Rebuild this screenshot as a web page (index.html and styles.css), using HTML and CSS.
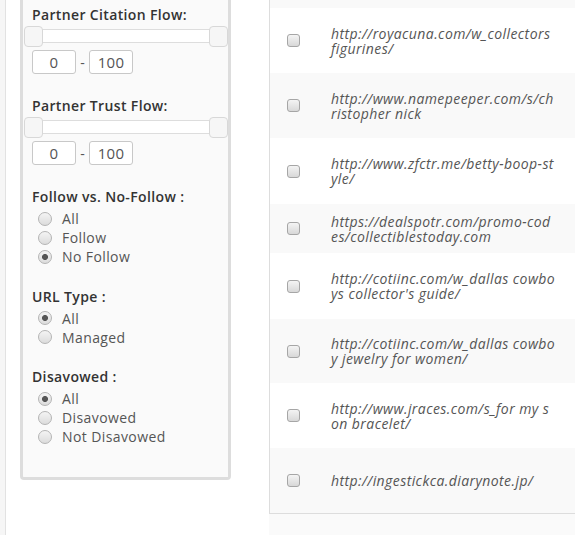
FILE: index.html
```html
<!DOCTYPE html>
<html lang="en">
<head>
<meta charset="utf-8">
<title>Link filters</title>
<link rel="stylesheet" href="styles.css">
</head>
<body>
<div class="page">
  <div class="strip"></div>
  <aside class="sidebar">
    <div class="panel">
      <section class="range">
        <h3 class="title">Partner Citation Flow:</h3>
        <div class="slider"><span class="handle"></span><span class="handle"></span></div>
        <div class="range-inputs"><input class="num" value="0"><span class="dash">-</span><input class="num" value="100"></div>
      </section>
      <section class="range">
        <h3 class="title">Partner Trust Flow:</h3>
        <div class="slider"><span class="handle"></span><span class="handle"></span></div>
        <div class="range-inputs"><input class="num" value="0"><span class="dash">-</span><input class="num" value="100"></div>
      </section>
      <section class="choice">
        <h3 class="title">Follow vs. No-Follow :</h3>
        <div class="options">
          <label class="opt"><input type="radio" name="follow" class="radio">All</label>
          <label class="opt"><input type="radio" name="follow" class="radio">Follow</label>
          <label class="opt"><input type="radio" name="follow" class="radio" checked>No Follow</label>
        </div>
      </section>
      <section class="choice">
        <h3 class="title">URL Type :</h3>
        <div class="options">
          <label class="opt"><input type="radio" name="urltype" class="radio" checked>All</label>
          <label class="opt"><input type="radio" name="urltype" class="radio">Managed</label>
        </div>
      </section>
      <section class="choice last">
        <h3 class="title">Disavowed :</h3>
        <div class="options">
          <label class="opt"><input type="radio" name="disavow" class="radio" checked>All</label>
          <label class="opt"><input type="radio" name="disavow" class="radio">Disavowed</label>
          <label class="opt"><input type="radio" name="disavow" class="radio">Not Disavowed</label>
        </div>
      </section>
    </div>
  </aside>
  <main class="results">
    <div class="table">
      <div class="row partial odd"></div>
      <div class="row"><span class="cb-cell"><input type="checkbox" class="cb"></span><span class="url">http://royacuna.com/w_collectors figurines/</span></div>
      <div class="row odd"><span class="cb-cell"><input type="checkbox" class="cb"></span><span class="url">http://www.namepeeper.com/s/christopher nick</span></div>
      <div class="row tall"><span class="cb-cell"><input type="checkbox" class="cb"></span><span class="url">http://www.zfctr.me/betty-boop-style/</span></div>
      <div class="row odd short"><span class="cb-cell"><input type="checkbox" class="cb"></span><span class="url">https://dealspotr.com/promo-codes/collectiblestoday.com</span></div>
      <div class="row tall"><span class="cb-cell"><input type="checkbox" class="cb"></span><span class="url">http://cotiinc.com/w_dallas cowboys collector's guide/</span></div>
      <div class="row odd low"><span class="cb-cell"><input type="checkbox" class="cb"></span><span class="url">http://cotiinc.com/w_dallas cowboy jewelry for women/</span></div>
      <div class="row"><span class="cb-cell"><input type="checkbox" class="cb"></span><span class="url">http://www.jraces.com/s_for my son bracelet/</span></div>
      <div class="row odd"><span class="cb-cell"><input type="checkbox" class="cb"></span><span class="url">http://ingestickca.diarynote.jp/</span></div>
    </div>
    <div class="table-foot"></div>
  </main>
</div>
</body>
</html>
```

FILE: styles.css
```css
* { box-sizing: border-box; }

html, body {
  margin: 0;
  padding: 0;
  height: 100%;
  overflow: hidden;
  background: #fff;
  font-family: "Open Sans", "Liberation Sans", sans-serif;
}

.page {
  display: flex;
  height: 535px;
}

.strip {
  width: 6px;
  flex: none;
  background: #f6f6f6;
  border-right: 1px solid #e2e2e2;
}

.sidebar {
  flex: none;
  padding-left: 14px;
}

.panel {
  width: 211px;
  background: #fafafa;
  border: 3px solid #dddddd;
  border-top: 0;
  border-radius: 0 0 4px 4px;
  padding: 5px 0 31px 9px;
}

.title {
  margin: 0;
  font-size: 14px;
  line-height: 20px;
  font-weight: 600;
  letter-spacing: 0.36px;
  color: #333;
}

.range {
  margin-bottom: 22px;
}

.slider {
  display: flex;
  justify-content: space-between;
  align-items: center;
  width: 204px;
  height: 14px;
  margin: 4px 0 0 -8px;
  background: #fff;
  border: 1px solid #dddddd;
  border-radius: 4px;
}

.handle {
  flex: none;
  width: 19px;
  height: 21px;
  margin: 0 -1px;
  background: #f6f6f6;
  border: 1px solid #d8d8d8;
  border-radius: 4px;
}

.range-inputs {
  display: flex;
  align-items: center;
  margin-top: 7px;
}

.num {
  width: 44px;
  height: 24px;
  margin: 0;
  padding: 0;
  border: 1px solid #c8c8c8;
  border-radius: 3px;
  background: #fff;
  text-align: center;
  font-family: "Open Sans", "Liberation Sans", sans-serif;
  font-size: 15px;
  letter-spacing: 0.3px;
  color: #555;
}

.dash {
  width: 13px;
  text-align: center;
  font-size: 14px;
  color: #555;
}

.choice {
  margin-bottom: 20.5px;
}

.choice.last {
  margin-bottom: 0;
}

.options {
  margin-top: 2px;
}

.opt {
  display: flex;
  align-items: center;
  height: 19px;
  padding-left: 6px;
  font-size: 14px;
  letter-spacing: 0.4px;
  color: #555;
}

.radio {
  appearance: none;
  -webkit-appearance: none;
  flex: none;
  width: 14px;
  height: 14px;
  margin: 0 10px 0 0;
  border: 1px solid #b4b4b4;
  border-radius: 50%;
  background: linear-gradient(#f4f4f4, #dcdcdc);
}

.radio:checked {
  background:
    radial-gradient(circle, #555 0, #555 2.6px, rgba(85,85,85,0) 3.4px),
    linear-gradient(#f4f4f4, #dcdcdc);
}

.results {
  flex: 1;
  min-width: 0;
  margin-left: 38px;
  display: flex;
  flex-direction: column;
  overflow: hidden;
}

.table {
  width: 380px;
  border-left: 1px solid #dddddd;
  border-bottom: 1px solid #dddddd;
}

.table-foot {
  flex: 1;
  background: #fafafa;
}

.row {
  display: flex;
  align-items: center;
  height: 65px;
  background: #fff;
}

.row.odd { background: #f9f9f9; }
.row.partial { height: 8px; }
.row.short { height: 49px; }
.row.tall { height: 66px; }
.row.low { height: 64px; }

.cb-cell {
  flex: none;
  width: 61px;
  padding-left: 17px;
  display: flex;
  align-items: center;
}

.cb {
  appearance: none;
  -webkit-appearance: none;
  width: 13px;
  height: 13px;
  margin: 0;
  border: 1px solid #a6a6a6;
  border-radius: 3px;
  background: linear-gradient(#f4f4f4, #d8d8d8);
}

.url {
  flex: none;
  width: 225.5px;
  font-size: 14px;
  line-height: 15px;
  font-style: italic;
  letter-spacing: 0.42px;
  color: #555;
  word-break: break-all;
}
```
